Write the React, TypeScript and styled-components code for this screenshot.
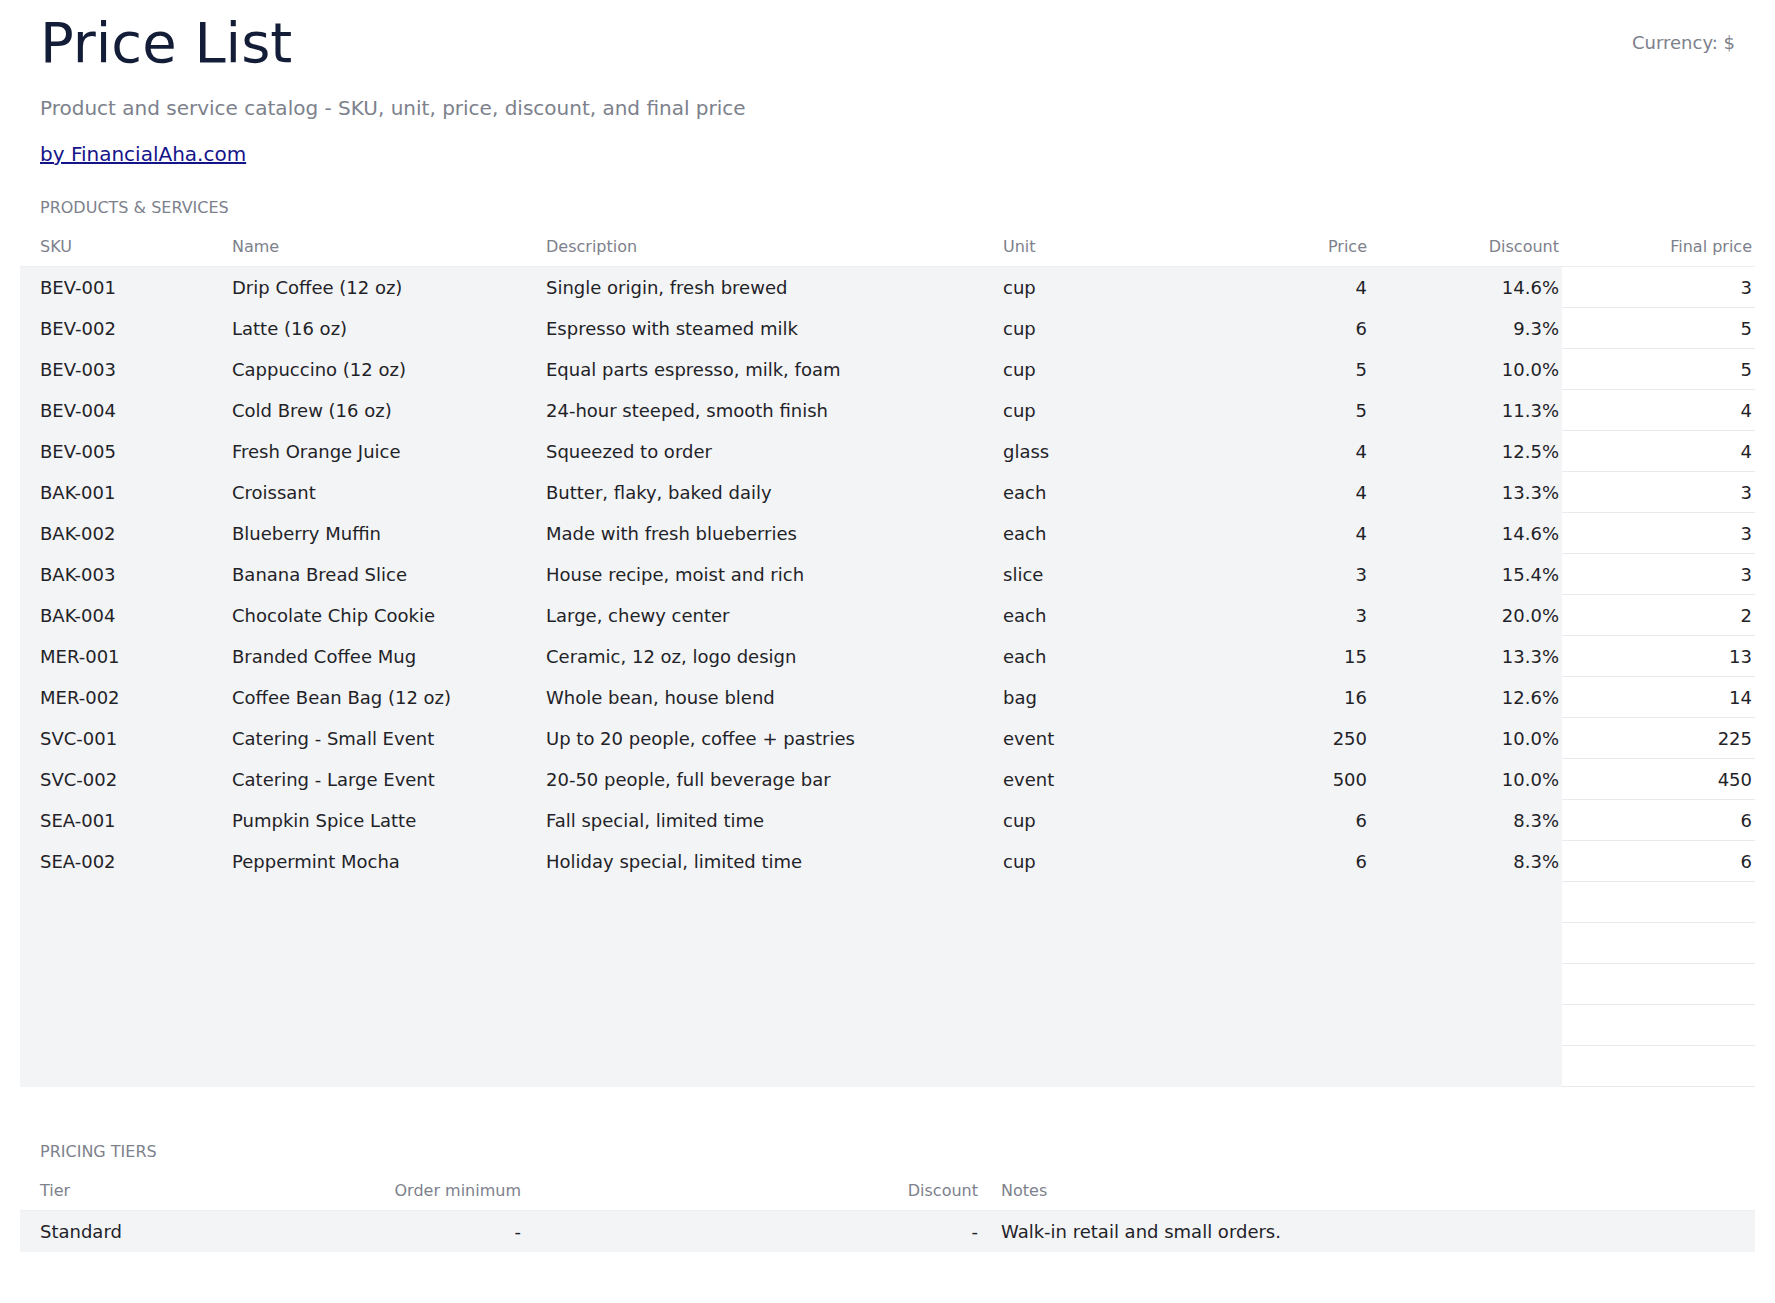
import React from "react";
import styled, { createGlobalStyle } from "styled-components";

const Global = createGlobalStyle`
  html, body { margin: 0; padding: 0; background: #fff; }
  body { font-family: "DejaVu Sans", Verdana, sans-serif; color: #1f2328; }
`;

const Page = styled.div`
  padding: 0 20px 20px 20px;
`;
const Head = styled.div`
  display: flex;
  justify-content: space-between;
  align-items: flex-start;
  padding: 0 20px;
`;
const Title = styled.h1`
  margin: 8px 0 0 0;
  font-size: 56px;
  font-weight: 400;
  line-height: 70px;
  color: #141d38;
`;
const Currency = styled.div`
  font-size: 18px;
  color: #7d818c;
  margin-top: 32px;
`;
const Sub = styled.p`
  margin: 16px 20px 0;
  font-size: 20px;
  line-height: 28px;
  color: #7d818c;
`;
const Link = styled.a`
  display: block;
  margin: 18px 20px 0;
  font-size: 20px;
  line-height: 28px;
  color: #14148a;
  text-decoration: underline;
`;
const Section = styled.div<{ top: number }>`
  margin: ${(p) => p.top}px 20px 0;
  font-size: 16px;
  line-height: 20px;
  color: #7d818c;
  text-transform: uppercase;
`;
const Grid = styled.div<{ cols: string }>`
  display: grid;
  grid-template-columns: ${(p) => p.cols};
`;
const HCell = styled.div<{ right?: boolean }>`
  font-size: 16px;
  color: #7d818c;
  height: 41px;
  line-height: 41px;
  border-bottom: 1px solid #eceef1;
  box-sizing: border-box;
  text-align: ${(p) => (p.right ? "right" : "left")};
  padding: ${(p) => (p.right ? "0 3px 0 0" : "0 0 0 20px")};
  white-space: nowrap;
`;
const Cell = styled.div<{ right?: boolean; white?: boolean }>`
  font-size: 18px;
  height: 41px;
  line-height: 41px;
  box-sizing: border-box;
  background: ${(p) => (p.white ? "#fff" : "#f3f4f6")};
  border-bottom: 1px solid ${(p) => (p.white ? "#e8eaee" : "#f3f4f6")};
  text-align: ${(p) => (p.right ? "right" : "left")};
  padding: ${(p) => (p.right ? "0 3px 0 0" : "0 0 0 20px")};
  white-space: nowrap;
  color: #1f2328;
`;

const rows: string[][] = [
  ["BEV-001", "Drip Coffee (12 oz)", "Single origin, fresh brewed", "cup", "4", "14.6%", "3"],
  ["BEV-002", "Latte (16 oz)", "Espresso with steamed milk", "cup", "6", "9.3%", "5"],
  ["BEV-003", "Cappuccino (12 oz)", "Equal parts espresso, milk, foam", "cup", "5", "10.0%", "5"],
  ["BEV-004", "Cold Brew (16 oz)", "24-hour steeped, smooth finish", "cup", "5", "11.3%", "4"],
  ["BEV-005", "Fresh Orange Juice", "Squeezed to order", "glass", "4", "12.5%", "4"],
  ["BAK-001", "Croissant", "Butter, flaky, baked daily", "each", "4", "13.3%", "3"],
  ["BAK-002", "Blueberry Muffin", "Made with fresh blueberries", "each", "4", "14.6%", "3"],
  ["BAK-003", "Banana Bread Slice", "House recipe, moist and rich", "slice", "3", "15.4%", "3"],
  ["BAK-004", "Chocolate Chip Cookie", "Large, chewy center", "each", "3", "20.0%", "2"],
  ["MER-001", "Branded Coffee Mug", "Ceramic, 12 oz, logo design", "each", "15", "13.3%", "13"],
  ["MER-002", "Coffee Bean Bag (12 oz)", "Whole bean, house blend", "bag", "16", "12.6%", "14"],
  ["SVC-001", "Catering - Small Event", "Up to 20 people, coffee + pastries", "event", "250", "10.0%", "225"],
  ["SVC-002", "Catering - Large Event", "20-50 people, full beverage bar", "event", "500", "10.0%", "450"],
  ["SEA-001", "Pumpkin Spice Latte", "Fall special, limited time", "cup", "6", "8.3%", "6"],
  ["SEA-002", "Peppermint Mocha", "Holiday special, limited time", "cup", "6", "8.3%", "6"],
  ["", "", "", "", "", "", ""],
  ["", "", "", "", "", "", ""],
  ["", "", "", "", "", "", ""],
  ["", "", "", "", "", "", ""],
  ["", "", "", "", "", "", ""],
];
const heads = ["SKU", "Name", "Description", "Unit", "Price", "Discount", "Final price"];
const rightCols = [4, 5, 6];

export default function App() {
  return (
    <Page>
      <Global />
      <Head>
        <Title>Price List</Title>
        <Currency>Currency: $</Currency>
      </Head>
      <Sub>Product and service catalog - SKU, unit, price, discount, and final price</Sub>
      <Link href="#">by FinancialAha.com</Link>
      <Section top={30}>Products &amp; Services</Section>
      <Grid cols="192px 314px 457px 202px 185px 192px 193px" style={{ marginTop: 8 }}>
        {heads.map((h, i) => (
          <HCell key={h} right={rightCols.includes(i)}>{h}</HCell>
        ))}
        {rows.map((r, ri) =>
          r.map((c, ci) => (
            <Cell key={ri + "-" + ci} right={rightCols.includes(ci)} white={ci === 6}>
              {c}
            </Cell>
          ))
        )}
      </Grid>
      <Section top={55}>Pricing Tiers</Section>
      <Grid cols="192px 312px 457px 774px" style={{ marginTop: 8 }}>
        <HCell>Tier</HCell>
        <HCell right>Order minimum</HCell>
        <HCell right>Discount</HCell>
        <HCell>Notes</HCell>
        <Cell>Standard</Cell>
        <Cell right>-</Cell>
        <Cell right>-</Cell>
        <Cell>Walk-in retail and small orders.</Cell>
      </Grid>
    </Page>
  );
}
